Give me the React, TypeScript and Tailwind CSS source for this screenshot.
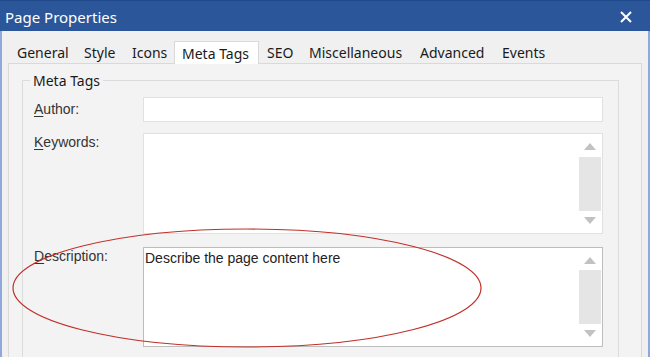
import React from "react";

const tabs = [
  { name: "General", w: 67 },
  { name: "Style", w: 48 },
  { name: "Icons", w: 50 },
  { name: "Meta Tags", w: 85, active: true },
  { name: "SEO", w: 42 },
  { name: "Miscellaneous", w: 111 },
  { name: "Advanced", w: 82 },
  { name: "Events", w: 70 },
];

function ScrollBar({ thumbTop, thumbH }: { thumbTop: number; thumbH: number }) {
  return (
    <div className="absolute right-0 top-0 bottom-0 w-[23px]">
      <svg className="absolute left-[5px] top-[9px]" width="12" height="7" viewBox="0 0 12 7">
        <polygon points="6,0 12,7 0,7" fill="#c2c2c2" />
      </svg>
      <div className="absolute left-0 right-[1px] bg-[#e5e5e5]" style={{ top: thumbTop, height: thumbH }} />
      <svg className="absolute left-[5px] bottom-[9px]" width="12" height="7" viewBox="0 0 12 7">
        <polygon points="0,0 12,0 6,7" fill="#c2c2c2" />
      </svg>
    </div>
  );
}

export default function App() {
  const ui = { fontFamily: '"Noto Sans", "Open Sans", sans-serif' };
  const arial = { fontFamily: '"Liberation Sans", Arial, sans-serif' };
  return (
    <div className="relative w-[650px] h-[357px] overflow-hidden bg-[#f0f0f0]" style={ui}>
      {/* Title bar */}
      <div className="h-[31px] bg-[#2b579a] border-t border-[#1e4a8c] flex items-center justify-between pl-[5px] pr-[18px]">
        <span className="text-white text-[15px] leading-none pt-[3px]">Page Properties</span>
        <svg width="12" height="12" viewBox="0 0 12 12" className="mt-[1px]">
          <path d="M1 1 L11 11 M11 1 L1 11" stroke="white" strokeWidth="2" />
        </svg>
      </div>
      {/* Body */}
      <div className="h-[326px] border-l-2 border-r-2 border-[#8fa8dc] pt-[10px] px-[6px]">
        {/* Tabs */}
        <div className="flex h-[22px] pl-[1px] relative z-10">
          {tabs.map((t) => (
            <div
              key={t.name}
              className={
                t.active
                  ? "h-[23px] bg-white border border-b-0 border-[#d9d9d9] pl-[7px] text-[14px] text-[#1a1a1a] leading-[23px]"
                  : "h-[22px] pl-[8px] text-[14px] text-[#1a1a1a] leading-[24px]"
              }
              style={{ width: t.w }}
            >
              {t.name}
            </div>
          ))}
        </div>
        {/* Panel */}
        <div className="h-[300px] border border-[#d9d9d9] bg-[#f3f3f3] pl-[13px] pr-[22px] pt-[7px]">
          <fieldset className="h-[320px] border border-[#dcdcdc] pl-[11px] pr-[15px] pt-[7px]">
            <legend className="ml-[-4px] px-[3px] text-[14px] text-[#1a1a1a] leading-[19px]">Meta Tags</legend>
            <div className="flex flex-col" style={arial}>
              <div className="flex items-center h-[25px]">
                <div className="w-[109px] text-[14px] text-[#333]">
                  <span className="underline underline-offset-2">A</span>uthor:
                </div>
                <div className="flex-1 h-[25px] bg-white border border-[#e1e1e1]" />
              </div>
              <div className="flex mt-[11px]">
                <div className="w-[109px] text-[14px] text-[#333] leading-[18px]">
                  <span className="underline underline-offset-2">K</span>eywords:
                </div>
                <div className="relative flex-1 h-[101px] bg-white border border-[#e1e1e1]">
                  <ScrollBar thumbTop={23} thumbH={54} />
                </div>
              </div>
              <div className="flex mt-[13px]">
                <div className="w-[109px] text-[14px] text-[#333] leading-[18px]">
                  <span className="underline underline-offset-2">D</span>escription:
                </div>
                <div className="relative flex-1 h-[100px] bg-white border border-[#bdbdbd]">
                  <div className="pl-[1px] pt-[1px] text-[14px] leading-[18px] text-[#222]">Describe the page content here</div>
                  <ScrollBar thumbTop={22} thumbH={54} />
                </div>
              </div>
            </div>
          </fieldset>
        </div>
      </div>
      {/* Red annotation ellipse */}
      <svg className="absolute left-0 top-0 pointer-events-none" width="650" height="357">
        <ellipse cx="247" cy="288" rx="234" ry="59" fill="none" stroke="#c0302a" strokeWidth="1.2" />
      </svg>
    </div>
  );
}
